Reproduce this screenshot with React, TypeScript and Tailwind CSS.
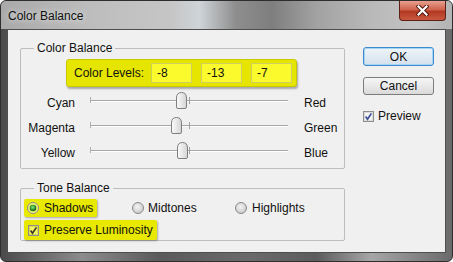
import React from 'react';

const levels = [-8, -13, -7];

const sliders = [
  { left: 'Cyan', right: 'Red', value: -8 },
  { left: 'Magenta', right: 'Green', value: -13 },
  { left: 'Yellow', right: 'Blue', value: -7 },
];

function Thumb() {
  return (
    <svg width="11" height="17" viewBox="0 0 11 17">
      <defs>
        <linearGradient id="thumbFill" x1="0" y1="0" x2="1" y2="0">
          <stop offset="0" stopColor="#fbfbfb" />
          <stop offset="1" stopColor="#d4d4d4" />
        </linearGradient>
      </defs>
      <path
        d="M0.5 15 L0.5 6 Q0.5 0.5 5.5 0.5 Q10.5 0.5 10.5 6 L10.5 15 Q10.5 16.5 9 16.5 L2 16.5 Q0.5 16.5 0.5 15 Z"
        fill="url(#thumbFill)"
        stroke="#7f7f7f"
      />
    </svg>
  );
}

function Radio({ checked, tint }: { checked?: boolean; tint?: boolean }) {
  return (
    <svg width="12" height="12" viewBox="0 0 12 12">
      <defs>
        <radialGradient id="radioOff" cx="0.45" cy="0.4" r="0.6">
          <stop offset="0" stopColor="#f4f4f4" />
          <stop offset="1" stopColor="#c9c9c9" />
        </radialGradient>
        <radialGradient id="radioDot" cx="0.45" cy="0.4" r="0.6">
          <stop offset="0" stopColor="#8ee27a" />
          <stop offset="0.6" stopColor="#2f9a26" />
          <stop offset="1" stopColor="#144d12" />
        </radialGradient>
      </defs>
      <circle cx="6" cy="6" r="5.5" fill={tint ? '#f2f27a' : 'url(#radioOff)'} stroke="#8a8a8a" />
      {checked && <circle cx="6" cy="6" r="3.3" fill="url(#radioDot)" />}
    </svg>
  );
}

function Check({ tint }: { tint?: boolean }) {
  return (
    <svg width="11" height="11" viewBox="0 0 11 11">
      <rect x="0.5" y="0.5" width="10" height="10" fill={tint ? '#f4f46a' : '#f4f4f4'} stroke="#8e8e8e" />
      <rect x="1.5" y="1.5" width="8" height="8" fill="none" stroke={tint ? '#d8d84a' : '#dcdcdc'} />
      <path
        d="M2.6 5.6 L4.5 8.2 L8.4 2.4"
        fill="none"
        stroke={tint ? '#3b3b20' : '#3d4f9a'}
        strokeWidth="1.7"
      />
    </svg>
  );
}

function SliderRow({ left, right, value }: { left: string; right: string; value: number }) {
  return (
    <div className="flex h-[25px] items-center">
      <span className="w-[54px] translate-y-[2px] text-right">{left}</span>
      <div className="relative ml-[15px] flex h-[17px] w-[198px] items-center">
        <div className="h-[2px] w-full border-t border-[#a6a6a6] border-b border-b-white" />
        <div className="absolute left-0 top-[5px] h-[6px] w-px bg-[#b0b0b0]" />
        <div className="absolute left-1/2 top-[5px] h-[7px] w-px bg-[#a0a0a0]" />
        <div className="absolute top-0" style={{ left: `calc(${50 + value / 2}% - 5.5px)` }}>
          <Thumb />
        </div>
      </div>
      <span className="ml-[16px] translate-y-[2px]">{right}</span>
    </div>
  );
}

export default function App() {
  return (
    <div className="h-[262px] w-[453px] bg-white text-[12px] leading-[14px] text-[#111] [font-family:'Liberation_Sans',Arial,sans-serif]">
      <div className="flex h-full flex-col overflow-hidden rounded-[6px] border border-[#2e2e2e] bg-[linear-gradient(90deg,#4a4a4a_0%,#8c8c8c_18%,#5a5a5a_35%,#6a6a6a_55%,#5c5c5c_70%,#a6a6a6_82%,#6a6a6a_100%)]">
        {/* title bar */}
        <div className="flex h-[28px] shrink-0 items-start justify-between bg-[linear-gradient(90deg,#a9a9a9_0%,#bdbdbd_20%,#c6c6c6_38%,#cfd4d8_44%,#8e8e8e_52%,#7e7e7e_60%,#a2a2a2_70%,#b9b9b9_82%,#c2c2c2_92%,#b4b4b4_100%)] pl-[7px] pr-[6px]">
          <span className="mt-[8px] [text-shadow:0_0_6px_rgba(255,255,255,0.9)]">Color Balance</span>
          <div className="flex h-[20px] w-[47px] items-center justify-center rounded-b-[4px] border border-t-0 border-[#5b2016] bg-[linear-gradient(180deg,#e8a090_0%,#d0634d_45%,#b23a22_55%,#c9583f_100%)]">
            <svg width="13" height="11" viewBox="0 0 13 11">
              <path d="M2.5 1.5 L10.5 9.5 M10.5 1.5 L2.5 9.5" stroke="#4a1208" strokeWidth="4" strokeLinecap="square" />
              <path d="M2.5 1.5 L10.5 9.5 M10.5 1.5 L2.5 9.5" stroke="#ffffff" strokeWidth="2.2" strokeLinecap="square" />
            </svg>
          </div>
        </div>

        {/* client area */}
        <div className="mx-[6px] mb-[8px] flex flex-1 border border-[#4e4e4e] bg-[#f0f0f0]">
          <div className="pl-[12px] pt-[11px]">
            <fieldset className="h-[128px] w-[325px] rounded-[2px] border border-[#bdbdbd]">
              <legend className="ml-[13px] px-[3px]">Color Balance</legend>
              <div className="ml-[45px] mt-[4px] flex h-[28px] w-[231px] items-center rounded-[3px] border border-[#c9c900] bg-[#e5e500] pl-[7px] shadow-[1px_2px_2px_rgba(0,0,0,0.3)]">
                <span className="w-[77px]">Color Levels:</span>
                <div className="flex gap-[9px]">
                  {levels.map((v, i) => (
                    <div
                      key={i}
                      className="flex h-[20px] w-[41px] items-center border border-[#cfcf60] bg-[#fafa2c] pl-[5px]"
                    >
                      {v}
                    </div>
                  ))}
                </div>
              </div>
              <div className="mt-[1px]">
                {sliders.map((s) => (
                  <SliderRow key={s.left} {...s} />
                ))}
              </div>
            </fieldset>

            <fieldset className="mt-[12px] h-[60px] w-[325px] rounded-[2px] border border-[#bdbdbd]">
              <legend className="ml-[13px] px-[3px]">Tone Balance</legend>
              <div className="ml-[3px] mt-[4px] flex h-[18px] items-center">
                <div className="flex h-[18px] w-[73px] items-center gap-[5px] rounded-[2px] bg-[#e8e800] pl-[3px] shadow-[1px_1px_2px_rgba(0,0,0,0.3)]">
                  <Radio checked tint />
                  <span>Shadows</span>
                </div>
                <div className="ml-[35px] flex w-[103px] items-center gap-[4px]">
                  <Radio />
                  <span>Midtones</span>
                </div>
                <div className="flex items-center gap-[5px]">
                  <Radio />
                  <span>Highlights</span>
                </div>
              </div>
              <div className="ml-[3px] mt-[3px] flex h-[20px] w-[133px] items-center gap-[5px] rounded-[2px] bg-[#e8e800] pl-[4px] shadow-[1px_1px_2px_rgba(0,0,0,0.3)]">
                <Check tint />
                <span>Preserve Luminosity</span>
              </div>
            </fieldset>
          </div>

          <div className="ml-[18px] flex flex-col pt-[17px]">
            <button className="h-[19px] w-[71px] rounded-[3px] border border-[#3c8ad0] bg-[linear-gradient(180deg,#eef5fb_0%,#e1ebf3_50%,#d3e0ec_100%)] shadow-[inset_0_0_0_1px_#a8d4f4]">
              OK
            </button>
            <button className="mt-[11px] h-[18px] w-[71px] rounded-[3px] border border-[#7c7c7c] bg-[linear-gradient(180deg,#f5f5f5_0%,#e9e9e9_50%,#d9d9d9_100%)]">
              Cancel
            </button>
            <div className="mt-[14px] flex items-center gap-[4px]">
              <Check />
              <span>Preview</span>
            </div>
          </div>
        </div>
      </div>
    </div>
  );
}
